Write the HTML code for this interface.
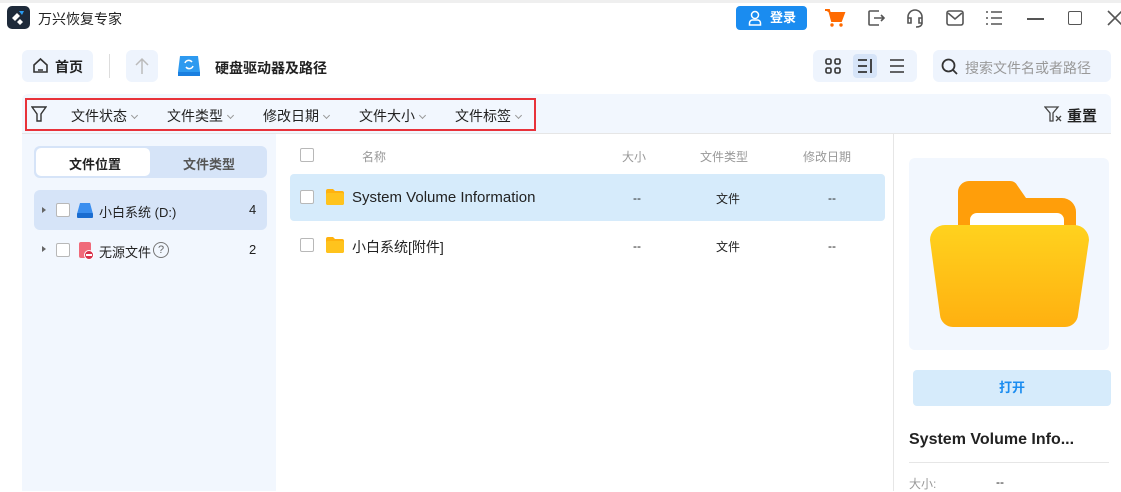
<!DOCTYPE html>
<html><head><meta charset="utf-8"><style>
*{margin:0;padding:0;box-sizing:border-box}
body{width:1121px;height:491px;overflow:hidden;background:#fff;font-family:"Liberation Sans","Noto Sans CJK SC",sans-serif;color:#222;position:relative}
.a{position:absolute}
.t{font-size:13px}
.chk{position:absolute;width:14px;height:14px;border:1px solid #b8b8b8;border-radius:2px;background:#fff}
.caret{display:inline-block;width:5px;height:5px;border-right:1px solid #999;border-bottom:1px solid #999;transform:rotate(45deg);margin-left:5px;position:relative;top:-3px}
</style></head><body>
<div class="a" style="left:0;top:0;width:1121px;height:3px;background:#efefef"></div>
<div class="a" style="left:7px;top:6px;width:23px;height:23px;background:#1e2a3a;border-radius:5px"></div>
<svg class="a" style="left:7px;top:6px" width="23" height="23"><path d="M5 12l5-5 3 3-5 5z" fill="#fff"/><path d="M12 5l5 0-2 4z" fill="#2a9df4"/><path d="M10 16l3-3 3 3-3 3z" fill="#fff"/></svg>
<div class="a t" style="left:38px;top:9px;font-size:14px">万兴恢复专家</div>
<div class="a" style="left:736px;top:6px;width:71px;height:24px;background:#1a8cf0;border-radius:4px;color:#fff;font-size:13px;font-weight:bold;line-height:24px;padding-left:34px">登录</div>
<svg class="a" style="left:748px;top:10px" width="14" height="16" fill="none" stroke="#fff" stroke-width="1.5"><circle cx="7" cy="5" r="3.5"/><path d="M1.5 15v-2a3 3 0 013-3h5a3 3 0 013 3v2z"/></svg>
<svg class="a" style="left:824px;top:8px" width="22" height="20"><path d="M1 2h4l3 11h9l3-8H6" fill="#ff6a00" stroke="#ff6a00" stroke-width="2"/><circle cx="8" cy="17" r="1.7" fill="#ff6a00"/><circle cx="17" cy="17" r="1.7" fill="#ff6a00"/></svg>
<svg class="a" style="left:866px;top:8px" width="20" height="20" fill="none" stroke="#555" stroke-width="1.6"><path d="M13 3H4a1 1 0 00-1 1v12a1 1 0 001 1h9M8 10h10M15 7l3 3-3 3"/></svg>
<svg class="a" style="left:905px;top:7px" width="20" height="22" fill="none" stroke="#555" stroke-width="1.6"><path d="M3 12v-2a7 7 0 0114 0v2M3 11h3v5H3zM14 11h3v5h-3zM17 16c0 3-3 4-6 4"/></svg>
<svg class="a" style="left:945px;top:8px" width="20" height="20" fill="none" stroke="#555" stroke-width="1.6"><rect x="2" y="3" width="16" height="14" rx="2"/><path d="M3 5l7 6 7-6"/></svg>
<svg class="a" style="left:985px;top:9px" width="18" height="18" fill="none" stroke="#555" stroke-width="1.6"><path d="M1 3h2M6 3h11M1 9h2M6 9h11M1 15h2M6 15h11"/></svg>
<div class="a" style="left:1027px;top:18px;width:17px;height:2px;background:#555"></div>
<div class="a" style="left:1068px;top:11px;width:14px;height:14px;border:1.6px solid #555;border-radius:2px"></div>
<svg class="a" style="left:1107px;top:10px" width="14" height="16" stroke="#555" stroke-width="1.6"><path d="M1 1l14 14M15 1L1 15"/></svg>

<div class="a" style="left:22px;top:50px;width:71px;height:32px;background:#eef4fd;border-radius:6px"></div>
<svg class="a" style="left:32px;top:57px" width="17" height="17" fill="none" stroke="#333" stroke-width="1.6"><path d="M2 8L8.5 2 15 8v7H2z M6 13h5"/></svg>
<div class="a" style="left:55px;top:57px;font-size:14px;font-weight:bold">首页</div>
<div class="a" style="left:109px;top:54px;width:1px;height:24px;background:#ddd"></div>
<div class="a" style="left:126px;top:50px;width:32px;height:32px;background:#eef4fd;border-radius:6px"></div>
<svg class="a" style="left:134px;top:57px" width="16" height="18" fill="none" stroke="#bbb" stroke-width="1.5"><path d="M8 17V2M2 8l6-6 6 6"/></svg>
<svg class="a" style="left:176px;top:53px" width="26" height="26"><path d="M4 3h18l2 16H2z" fill="#2e9af0"/><rect x="2" y="19" width="22" height="4" fill="#1a7fe0"/><path d="M9 10a4 4 0 017-1M17 13a4 4 0 01-7 1" stroke="#fff" stroke-width="1.5" fill="none"/></svg>
<div class="a" style="left:215px;top:58px;font-size:14px;font-weight:bold">硬盘驱动器及路径</div>

<div class="a" style="left:813px;top:50px;width:104px;height:32px;background:#eef4fd;border-radius:6px"></div>
<div class="a" style="left:853px;top:54px;width:24px;height:24px;background:#d6e4f8;border-radius:4px"></div>
<svg class="a" style="left:825px;top:58px" width="16" height="16" fill="none" stroke="#333" stroke-width="1.6"><rect x="1" y="1" width="5" height="5" rx="1.5"/><rect x="10" y="1" width="5" height="5" rx="1.5"/><rect x="1" y="10" width="5" height="5" rx="1.5"/><rect x="10" y="10" width="5" height="5" rx="1.5"/></svg>
<svg class="a" style="left:857px;top:58px" width="16" height="16" stroke="#333" stroke-width="1.8"><path d="M1 2h9M1 8h9M1 14h9M14 1v14"/></svg>
<svg class="a" style="left:889px;top:58px" width="16" height="16" stroke="#333" stroke-width="1.6"><path d="M1 2h14M1 8h14M1 14h14"/></svg>
<div class="a" style="left:933px;top:50px;width:178px;height:32px;background:#eef4fd;border-radius:6px"></div>
<svg class="a" style="left:941px;top:58px" width="18" height="18" fill="none" stroke="#333" stroke-width="1.8"><circle cx="7.5" cy="7.5" r="6"/><path d="M12 12l4 4"/></svg>
<div class="a" style="left:965px;top:58px;font-size:14px;color:#999">搜索文件名或者路径</div>

<div class="a" style="left:22px;top:94px;width:1089px;height:40px;background:#f2f7fe;border-radius:6px 6px 0 0;border-bottom:1px solid #e6e6e6"></div>
<div class="a" style="left:25px;top:98px;width:511px;height:33px;border:2px solid #e8323a"></div>
<svg class="a" style="left:31px;top:106px" width="16" height="16" fill="none" stroke="#333" stroke-width="1.4"><path d="M1 1h14L10 8v7H6V8z"/></svg>
<div class="a" style="left:71px;top:106px;font-size:14px">文件状态<span class="caret"></span></div>
<div class="a" style="left:167px;top:106px;font-size:14px">文件类型<span class="caret"></span></div>
<div class="a" style="left:263px;top:106px;font-size:14px">修改日期<span class="caret"></span></div>
<div class="a" style="left:359px;top:106px;font-size:14px">文件大小<span class="caret"></span></div>
<div class="a" style="left:455px;top:106px;font-size:14px">文件标签<span class="caret"></span></div>
<svg class="a" style="left:1044px;top:106px" width="20" height="17" fill="none" stroke="#444" stroke-width="1.3"><path d="M1 1h13L9 7v8H6V7zM12 10l5 5M17 10l-5 5"/></svg>
<div class="a" style="left:1067px;top:105px;font-size:15px;font-weight:bold">重置</div>

<div class="a" style="left:22px;top:134px;width:254px;height:357px;background:#f2f7fe"></div>
<div class="a" style="left:34px;top:146px;width:233px;height:32px;background:#d6e4f8;border-radius:6px"></div>
<div class="a" style="left:36px;top:148px;width:114px;height:28px;background:#fff;border-radius:5px"></div>
<div class="a" style="left:69px;top:154px;font-size:13px;font-weight:bold">文件位置</div>
<div class="a" style="left:183px;top:154px;font-size:13px;font-weight:bold;color:#555">文件类型</div>
<div class="a" style="left:34px;top:190px;width:233px;height:40px;background:#d6e4f8;border-radius:6px"></div>
<div class="a" style="left:42px;top:207px;border-left:4px solid #666;border-top:3px solid transparent;border-bottom:3px solid transparent"></div>
<div class="chk" style="left:56px;top:203px"></div>
<svg class="a" style="left:77px;top:202px" width="16" height="16"><path d="M3 1h10l3 11H0z" fill="#3a8eef"/><rect x="0" y="11" width="16" height="5" rx="1" fill="#1a6cd0"/></svg>
<div class="a" style="left:99px;top:202px;font-size:13px">小白系统 (D:)</div>
<div class="a" style="left:249px;top:202px;font-size:13px">4</div>
<div class="a" style="left:42px;top:246px;border-left:4px solid #666;border-top:3px solid transparent;border-bottom:3px solid transparent"></div>
<div class="chk" style="left:56px;top:243px"></div>
<div class="a" style="left:79px;top:242px;width:12px;height:16px;background:#f06a7a;border-radius:2px"></div>
<div class="a" style="left:84px;top:250px;width:10px;height:10px;background:#d9304a;border-radius:50%;border:1px solid #fff"></div>
<div class="a" style="left:86px;top:254px;width:6px;height:1.5px;background:#fff"></div>
<div class="a" style="left:99px;top:242px;font-size:13px">无源文件</div>
<div class="a" style="left:153px;top:242px;width:16px;height:16px;border:1.3px solid #777;border-radius:50%;font-size:11px;text-align:center;line-height:14px;color:#666">?</div>
<div class="a" style="left:249px;top:242px;font-size:13px">2</div>

<div class="chk" style="left:300px;top:148px"></div>
<div class="a" style="left:362px;top:148px;font-size:12px;color:#999">名称</div>
<div class="a" style="left:622px;top:148px;font-size:12px;color:#999">大小</div>
<div class="a" style="left:700px;top:148px;font-size:12px;color:#999">文件类型</div>
<div class="a" style="left:803px;top:148px;font-size:12px;color:#999">修改日期</div>
<div class="a" style="left:290px;top:174px;width:595px;height:47px;background:#d6ebfb;border-radius:4px"></div>
<div class="chk" style="left:300px;top:190px"></div>
<svg class="a" style="left:325px;top:188px" width="19" height="17"><path d="M1 3a2 2 0 012-2h5l2 2h7a2 2 0 012 2v10a2 2 0 01-2 2H3a2 2 0 01-2-2z" fill="#ffb20f"/><rect x="1" y="5" width="18" height="12" rx="2" fill="#ffc31d"/></svg>
<div class="a" style="left:352px;top:189px;font-size:15px">System Volume Information</div>
<div class="a" style="left:633px;top:191px;font-size:12px">--</div>
<div class="a" style="left:716px;top:190px;font-size:12px">文件</div>
<div class="a" style="left:828px;top:191px;font-size:12px">--</div>
<div class="chk" style="left:300px;top:238px"></div>
<svg class="a" style="left:325px;top:236px" width="19" height="17"><path d="M1 3a2 2 0 012-2h5l2 2h7a2 2 0 012 2v10a2 2 0 01-2 2H3a2 2 0 01-2-2z" fill="#ffb20f"/><rect x="1" y="5" width="18" height="12" rx="2" fill="#ffc31d"/></svg>
<div class="a" style="left:352px;top:237px;font-size:14px">小白系统[附件]</div>
<div class="a" style="left:633px;top:239px;font-size:12px">--</div>
<div class="a" style="left:716px;top:238px;font-size:12px">文件</div>
<div class="a" style="left:828px;top:239px;font-size:12px">--</div>

<div class="a" style="left:893px;top:134px;width:1px;height:357px;background:#e6e6e6"></div>
<div class="a" style="left:909px;top:158px;width:200px;height:192px;background:#f2f7fe;border-radius:6px"></div>
<svg class="a" style="left:928px;top:180px" width="162" height="148">
<defs><linearGradient id="g" x1="0" y1="0" x2="0" y2="1"><stop offset="0" stop-color="#ffd21e"/><stop offset="1" stop-color="#ffb010"/></linearGradient></defs>
<path d="M30 12a11 11 0 0111-11h41a8 8 0 017 4l9 13h36a14 14 0 0114 14v20H30z" fill="#ff9e0a"/>
<rect x="42" y="33" width="94" height="40" rx="7" fill="#fff"/>
<path d="M2 60a15 15 0 0115-15h130a15 15 0 0114 15l-11 75a13 13 0 01-13 12H25a13 13 0 01-13-12z" fill="url(#g)"/>
</svg>
<div class="a" style="left:913px;top:370px;width:198px;height:36px;background:#d6ebfb;border-radius:4px;color:#1a8cf0;font-size:13px;font-weight:bold;text-align:center;line-height:36px">打开</div>
<div class="a" style="left:909px;top:431px;font-size:16px;font-weight:bold">System Volume Info...</div>
<div class="a" style="left:909px;top:462px;width:200px;height:1px;background:#e6e6e6"></div>
<div class="a" style="left:909px;top:475px;font-size:12px;color:#999">大小:</div>
<div class="a" style="left:996px;top:475px;font-size:12px">--</div>
</body></html>
